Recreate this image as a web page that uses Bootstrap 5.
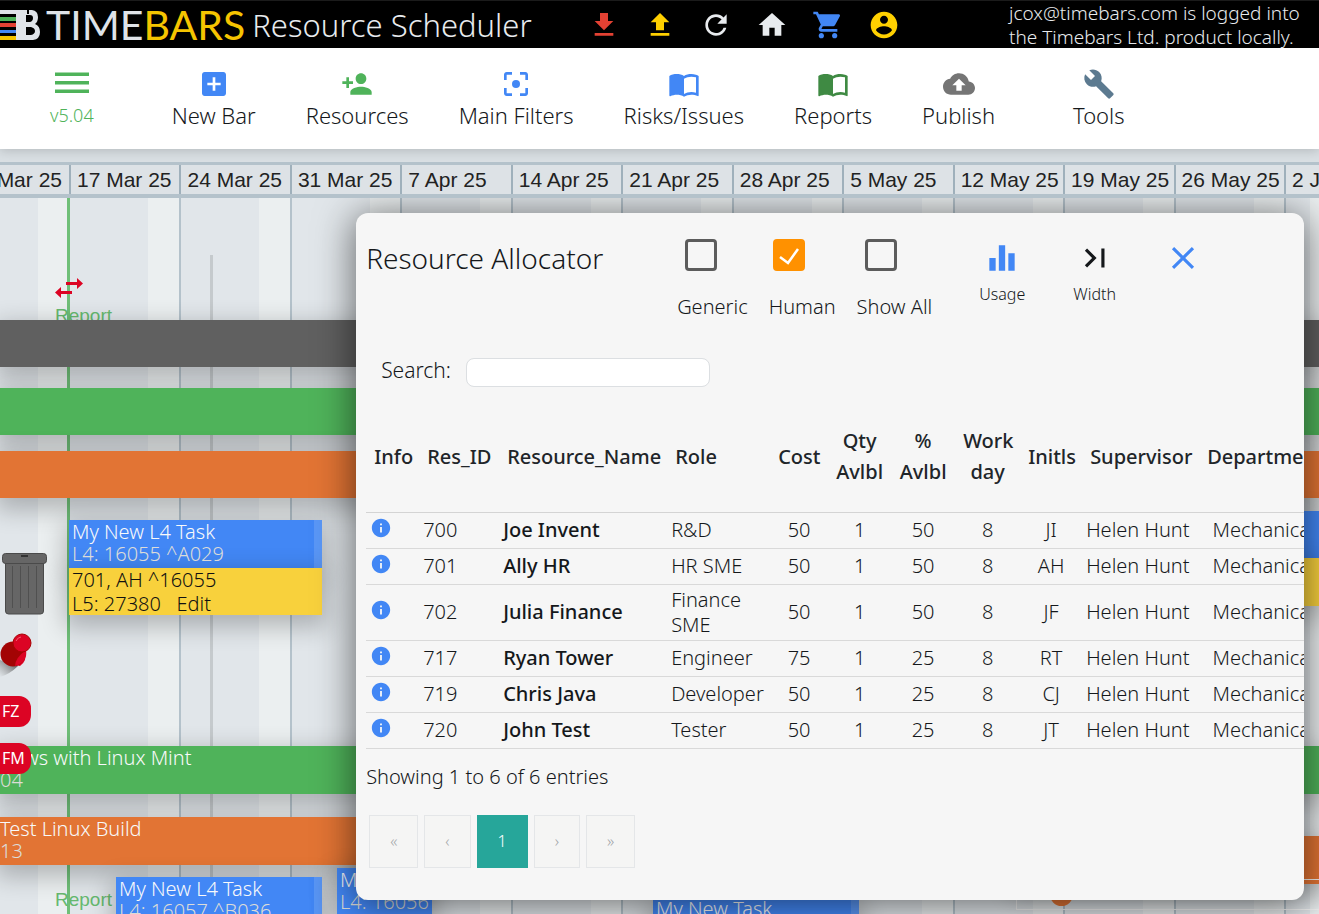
<!DOCTYPE html>
<html lang="en">
<head>
<meta charset="utf-8">
<meta name="viewport" content="width=device-width, initial-scale=1">
<title>Timebars Resource Scheduler</title>
<link rel="stylesheet" href="https://cdn.jsdelivr.net/npm/bootstrap@5.3.0/dist/css/bootstrap.min.css">
<style>
  :root { --tb-blue: #4287f5; --tb-green: #4fb35a; --tb-orange: #e27434; --tb-red: #dc0424; --tb-line: #b4c2cb; }
  body { font: 300 20px/25px "Noto Sans", "Open Sans", sans-serif; color: #15181b; background: #d9dfe3; }
  svg { display: block; fill: currentColor; }
  button { font-weight: 300; }

  .topbar { height: 48px; background: #000; color: #e8ebee; border-top: 1px solid #1b1b1b; }
  .brand-mark { width: 40px; height: 30px; }
  .brand-word { margin: 0 7px 0 6px; font: 400 41px/48px Lato, sans-serif; color: #dfe3e8; }
  .brand-word span { color: #f5c400; }
  .app-title { font-size: 31px; line-height: 48px; }
  .quick-links { gap: 24px; margin-left: 56px; }
  .quick-links svg, .tool svg { width: 32px; height: 32px; }
  .login-note { font-size: 19px; line-height: 24px; width: 310px; }

  .toolbar { gap: 50px; padding: 20px 0 19px 50px; background: #fff; box-shadow: 0 2px 10px rgba(0,0,0,.16); z-index: 4; }
  .tool { padding: 0; border: 0; background: none; color: #15181b; font-size: 22px; line-height: 30px; }
  .tool svg { margin: 0 auto; }
  .tool-version { margin-right: 28px; font-size: 18px; color: var(--tb-green); }
  .tool-last { margin-left: 28px; }

  .week-grid { display: grid; grid-template-columns: 69px repeat(11, 1fr) 35px; }
  .dates { margin-top: 13px; border-top: 3px solid var(--tb-line); border-bottom: 4px solid var(--tb-line);
           font: 400 21px/29px "Liberation Sans", Arial, sans-serif; color: #222; background: #dde2e6; z-index: 3; }
  .dates div { overflow: hidden; white-space: nowrap; padding-left: 6px; border-left: 2px solid #9fb0bb; }
  .dates div:first-child { display: flex; justify-content: flex-end; padding: 0 7px 0 0; border: 0; }
  .week-cols div { border-left: 2px solid var(--tb-line);
           background: linear-gradient(to right, #e1e6ea 72%, #ebeff0 72%); }
  .week-cols div:first-child { border: 0; background: linear-gradient(to right, #e1e6ea 55%, #ebeff0 55%); }
  .week-cols div:nth-child(2) { border-left: 0; }
  .report-line { left: 67px; width: 3px; background: #6fbf78; }
  .grey-line { left: 210px; top: 57px; width: 3px; background: rgba(0,0,0,.12); }
  .report-tag { left: 55px; font: 400 19px/24px "Liberation Sans", Arial, sans-serif; color: #66b96f; }
  .move-icon { left: 55px; top: 78px; width: 28px; height: 24px; color: var(--tb-red); }

  .gantt { min-height: 0; }
  .lanes { padding-top: 122px; }
  .gbar { height: 47px; box-shadow: 0 8px 24px 4px rgba(0,0,0,.24); white-space: nowrap; overflow: hidden;
          line-height: 22px; padding-top: 1px; color: #f8f9fa; }
  .gbar small { display: block; font-size: 20px; color: #dcdcd8; }
  .bar-tall { height: 48px; }
  .bar-grey { background: #606060; }
  .bar-green { background: var(--tb-green); }
  .bar-orange { background: var(--tb-orange); }
  .bar-blue { background: var(--tb-blue); padding-left: 3px; }
  .bar-yellow { background: #f8d13c; color: #111; line-height: 24px; padding: 0 0 0 3px; }
  .handle { border-right: 8px solid #5a97f6; }
  .gap-a { margin-top: 21px; } .gap-b { margin-top: 16px; } .gap-c { margin-top: 13px; }
  .gap-d { margin-top: 131px; } .gap-e { margin-top: 23px; }
  .edge-col { width: 60px; }
  .task-a { margin: 9px 0 0 69px; width: 253px; }
  .late-col { width: 303px; margin-top: 19px; }
  .task-b { margin: 9px 0 0 116px; width: 206px; }
  .task-c { margin-left: 15px; width: 95px; }
  .task-d { margin: 29px 0 0 221px; width: 206px; }
  .task-row { margin-top: 3px; }
  .milestone { height: 31px; margin-top: -5px; border: 1px solid #f0f0f0; border-right: 0; padding: 3px 0 0 33px; }
  .milestone i { display: block; width: 23px; height: 23px; border-radius: 50%; background: var(--tb-orange); }

  .side-tools { left: 0; top: 354px; z-index: 2; }
  .pin-icon { margin: 16px 0 0; }
  .pill { width: 31px; height: 31px; padding: 0 0 0 2px; border: 0; border-radius: 0 12px 12px 0; background: var(--tb-red);
          color: #fff; font-size: 16px; font-weight: 400; line-height: 31px; text-align: left; }

  .allocator { left: 27%; right: 15px; top: 15px; padding: 26px 0 32px 10px; border-radius: 12px; background: #f6f6f6;
               box-shadow: 0 4px 38px 2px rgba(0,0,0,.55); overflow: hidden; z-index: 2; }
  .allocator h1 { width: 311px; font-size: 28px; font-weight: 300; line-height: 38px; }
  .check-set { gap: 21px; }
  .check-set .form-check-input { display: block; width: 32px; height: 32px; margin: 0 0 21px; border: 3px solid #5c5c5c;
               border-radius: 4px; background-color: transparent; }
  .check-set .form-check-input:checked { border-color: #ff9100; background-color: #ff9100; background-size: 30px; background-image:
      url("data:image/svg+xml,%3Csvg xmlns='http://www.w3.org/2000/svg' viewBox='0 0 30 30'%3E%3Cpath d='M6 17l8 6L24 9' fill='none' stroke='%23fff' stroke-width='2.500'/%3E%3C/svg%3E"); }
  .check-set label { display: block; line-height: 30px; }
  .action-set { gap: 48px; margin-left: 47px; }
  .action { padding: 0; border: 0; background: none; font-size: 16px; line-height: 24px; color: #15181b; }
  .action svg { width: 38px; height: 38px; margin: 0 auto 5px; }
  .search-row { margin: 36px 0 14px 15px; gap: 15px; font-size: 21px; line-height: 25px; }
  .search-row input { width: 244px; height: 29px; border-radius: 8px; border-color: #dcdfe2; }
  .res-table { width: 1000px; table-layout: fixed; --bs-table-bg: transparent; }
  .res-table th { height: 111px; padding: 0 8px; font-weight: 500; line-height: 31px; vertical-align: middle; border-color: #d4d4d4; color: #212529; }
  .res-table td { height: 36px; padding: 2px 4px 3px; vertical-align: middle; border-color: #d9d9d9; color: #15181b; }
  .res-table td:nth-child(3) { font-weight: 500; }
  .res-table td:nth-child(n+5):not(:nth-child(10)), .res-table th:nth-child(n+5):not(:nth-child(10)) { text-align: center; }
  .res-table button { display: block; padding: 0 0 4px; border: 0; background: none; color: var(--tb-blue); }
  .res-table button svg { width: 22px; height: 22px; }
  .entries { margin: 13px 0 23px; line-height: 30px; }
  .pages { --bs-pagination-border-radius: 0; gap: 7px; margin-left: 3px; }
  .pages .page-link { padding: 0 20px; line-height: 51px; border: 1px solid #e4e6e8; background: #f5f5f4; color: #a0a3a6; }
  .pages .active .page-link { background: #26a69a; border-color: #26a69a; color: #fff; }
</style>
</head>
<body class="vh-100 d-flex flex-column overflow-hidden">

<header class="topbar d-flex align-items-center flex-shrink-0 text-nowrap">
  <svg class="brand-mark" viewBox="0 0 40 30" aria-hidden="true">
    <path fill="#dfe3e8" d="M0 0h27v4H0zM16 2h8v28h-8z"/>
    <path fill="#dfe3e8" fill-rule="evenodd" d="M29 0h3q6 1 6 7q0 5-3 7q5 2 5 8q0 7-7 8H20V4h9zM26 5v7h4q3-1 3-4t-3-3zM26 17v8h5q4-1 4-4t-4-4z"/>
    <path fill="#4fb35a" d="M0 7h16v4H0z"/><path fill="#e34133" d="M0 13h16v4H0z"/>
    <path fill="#4287f5" d="M0 20h16v3H0z"/><path fill="#f5c400" d="M0 26h16v4H0z"/>
  </svg>
  <div class="brand-word">TIME<span>BARS</span></div>
  <div class="app-title">Resource Scheduler</div>
  <nav class="quick-links d-flex" aria-label="Quick links">
    <a href="#" aria-label="Download" style="color:#e34133"><svg viewBox="0 0 24 24"><path d="M19 9h-4V3H9v6H5l7 7 7-7zM5 18v2h14v-2H5z"/></svg></a>
    <a href="#" aria-label="Upload" style="color:#ffd000"><svg viewBox="0 0 24 24"><path d="M9 16h6v-6h4l-7-7-7 7h4zm-4 2h14v2H5z"/></svg></a>
    <a href="#" aria-label="Refresh" style="color:#e8ebee"><svg viewBox="0 0 24 24"><path d="M17.65 6.35C16.2 4.9 14.21 4 12 4c-4.42 0-7.99 3.58-7.99 8s3.57 8 7.99 8c3.73 0 6.84-2.55 7.73-6h-2.08c-.82 2.33-3.04 4-5.65 4-3.31 0-6-2.69-6-6s2.69-6 6-6c1.66 0 3.14.69 4.22 1.78L13 11h7V4l-2.35 2.35z"/></svg></a>
    <a href="#" aria-label="Home" style="color:#e8ebee"><svg viewBox="0 0 24 24"><path d="M10 20v-6h4v6h5v-8h3L12 3 2 12h3v8z"/></svg></a>
    <a href="#" aria-label="Cart" style="color:#4287f5"><svg viewBox="0 0 24 24"><path d="M7 18c-1.1 0-1.99.9-1.99 2S5.9 22 7 22s2-.9 2-2-.9-2-2-2zM1 2v2h2l3.6 7.59-1.35 2.45c-.16.28-.25.61-.25.96 0 1.1.9 2 2 2h12v-2H7.42c-.14 0-.25-.11-.25-.25l.03-.12.9-1.63h7.45c.75 0 1.41-.41 1.75-1.03l3.58-6.49c.08-.14.12-.31.12-.48 0-.55-.45-1-1-1H5.21l-.94-2H1zm16 16c-1.1 0-1.99.9-1.99 2s.89 2 1.99 2 2-.9 2-2-.9-2-2-2z"/></svg></a>
    <a href="#" aria-label="Account" style="color:#ffd000"><svg viewBox="0 0 24 24"><path d="M12 2C6.48 2 2 6.48 2 12s4.48 10 10 10 10-4.48 10-10S17.52 2 12 2zm0 3c1.66 0 3 1.34 3 3s-1.34 3-3 3-3-1.34-3-3 1.34-3 3-3zm0 14.2c-2.5 0-4.71-1.28-6-3.22.03-1.99 4-3.08 6-3.08 1.99 0 5.97 1.09 6 3.08-1.29 1.94-3.5 3.22-6 3.22z"/></svg></a>
  </nav>
  <div class="login-note ms-auto">jcox@timebars.com is logged into<br>the Timebars Ltd. product locally.</div>
</header>

<nav class="toolbar d-flex flex-shrink-0 text-nowrap position-relative" aria-label="Main">
  <button class="tool tool-version"><svg viewBox="0 0 32 32" overflow="visible"><path d="M-1 4.500h34V8H-1zM-1 13h34v3.500H-1zM-1 21.500h34V25H-1z"/></svg>v5.04</button>
  <button class="tool"><svg viewBox="0 0 24 24" color="#4287f5"><path d="M19 3H5c-1.11 0-2 .9-2 2v14c0 1.1.89 2 2 2h14c1.1 0 2-.9 2-2V5c0-1.1-.9-2-2-2zm-2 10h-4v4h-2v-4H7v-2h4V7h2v4h4v2z"/></svg>New Bar</button>
  <button class="tool"><svg viewBox="0 0 24 24" color="#4fb35a"><path d="M15 12c2.21 0 4-1.79 4-4s-1.79-4-4-4-4 1.79-4 4 1.79 4 4 4zm-9-2V7H4v3H1v2h3v3h2v-3h3v-2H6zm9 4c-2.67 0-8 1.34-8 4v2h16v-2c0-2.66-5.33-4-8-4z"/></svg>Resources</button>
  <button class="tool"><svg viewBox="0 0 24 24" color="#4287f5"><circle cx="12" cy="12" r="3"/><path d="M5 15H3v4c0 1.1.9 2 2 2h4v-2H5v-4zM5 5h4V3H5c-1.1 0-2 .9-2 2v4h2V5zm14-2h-4v2h4v4h2V5c0-1.1-.9-2-2-2zm0 16h-4v2h4c1.1 0 2-.9 2-2v-4h-2v4z"/></svg>Main Filters</button>
  <button class="tool"><svg viewBox="0 0 24 24" color="#4287f5"><path d="M21 5c-1.11-.35-2.33-.5-3.5-.5-1.95 0-4.05.4-5.5 1.5-1.45-1.1-3.55-1.5-5.5-1.5S2.45 4.9 1 6v14.65c0 .25.25.5.5.5.1 0 .15-.05.25-.05C3.1 20.45 5.05 20 6.5 20c1.95 0 4.05.4 5.5 1.5 1.35-.85 3.8-1.5 5.5-1.5 1.65 0 3.35.3 4.75 1.05.1.05.15.05.25.05.25 0 .5-.25.5-.5V6c-.6-.45-1.25-.75-2-1zm0 13.5c-1.1-.35-2.3-.5-3.5-.5-1.7 0-4.15.65-5.5 1.5V8c1.35-.85 3.8-1.5 5.5-1.5 1.2 0 2.4.15 3.5.5v11.5z"/></svg>Risks/Issues</button>
  <button class="tool"><svg viewBox="0 0 24 24" color="#3f8a43"><path d="M21 5c-1.11-.35-2.33-.5-3.5-.5-1.95 0-4.05.4-5.5 1.5-1.45-1.1-3.55-1.5-5.5-1.5S2.45 4.9 1 6v14.65c0 .25.25.5.5.5.1 0 .15-.05.25-.05C3.1 20.45 5.05 20 6.5 20c1.95 0 4.05.4 5.5 1.5 1.35-.85 3.8-1.5 5.5-1.5 1.65 0 3.35.3 4.75 1.05.1.05.15.05.25.05.25 0 .5-.25.5-.5V6c-.6-.45-1.25-.75-2-1zm0 13.5c-1.1-.35-2.3-.5-3.5-.5-1.7 0-4.15.65-5.5 1.5V8c1.35-.85 3.8-1.5 5.5-1.5 1.2 0 2.4.15 3.5.5v11.5z"/></svg>Reports</button>
  <button class="tool"><svg viewBox="0 0 24 24" color="#757575"><path d="M19.35 10.04C18.67 6.59 15.64 4 12 4 9.11 4 6.6 5.64 5.35 8.04 2.34 8.36 0 10.91 0 14c0 3.31 2.69 6 6 6h13c2.76 0 5-2.24 5-5 0-2.64-2.05-4.78-4.65-4.96zM14 13v4h-4v-4H7l5-5 5 5h-3z"/></svg>Publish</button>
  <button class="tool tool-last"><svg viewBox="0 0 24 24" color="#5c7a90"><path d="M22.7 19l-9.1-9.1c.9-2.3.4-5-1.5-6.9-2-2-5-2.4-7.4-1.3L9 6 6 9 1.6 4.7C.4 7.1.9 10.1 2.9 12.1c1.9 1.9 4.6 2.4 6.9 1.5l9.1 9.1c.4.4 1 .4 1.4 0l2.3-2.3c.5-.4.5-1.1.1-1.4z"/></svg>Tools</button>
</nav>

<div class="week-grid dates flex-shrink-0 position-relative">
  <div>10 Mar 25</div><div>17 Mar 25</div><div>24 Mar 25</div><div>31 Mar 25</div><div>7 Apr 25</div><div>14 Apr 25</div><div>21 Apr 25</div><div>28 Apr 25</div><div>5 May 25</div><div>12 May 25</div><div>19 May 25</div><div>26 May 25</div><div>2 Jun 25</div>
</div>

<main class="gantt position-relative flex-fill">
  <div class="week-grid week-cols position-absolute top-0 start-0 w-100 h-100">
    <div></div><div></div><div></div><div></div><div></div><div></div><div></div><div></div><div></div><div></div><div></div><div></div><div></div>
  </div>
  <div class="report-line position-absolute top-0 h-100"></div>
  <div class="grey-line position-absolute bottom-0"></div>
  <svg class="move-icon position-absolute" viewBox="0 0 28 24"><path d="M11 6h11V2l6 5.500-6 5.500V9H11zM17 18H6v4l-6-5.500L6 11v4h11z"/></svg>
  <div class="report-tag position-absolute" style="top:106px">Report</div>
  <div class="report-tag position-absolute" style="top:690px">Report</div>

  <div class="lanes position-relative h-100 overflow-hidden">
    <div class="gbar bar-grey"></div>
    <div class="gbar bar-green gap-a"></div>
    <div class="gbar bar-orange gap-b"></div>
    <div class="d-flex justify-content-between align-items-start gap-c">
      <div class="task-a">
        <div class="gbar bar-tall bar-blue handle">My New L4 Task<small>L4: 16055 ^A029</small></div>
        <div class="gbar bar-yellow">701, AH ^16055<br>L5: 27380 &nbsp; Edit</div>
      </div>
      <div class="edge-col">
        <div class="gbar bar-blue"></div>
        <div class="gbar bar-tall bar-yellow"></div>
      </div>
    </div>
    <div class="gbar bar-tall bar-green gap-d"><span class="ms-4">ws with Linux Mint</span><small>04</small></div>
    <div class="d-flex align-items-start gap-e">
      <div class="flex-fill">
        <div class="gbar bar-tall bar-orange">Test Linux Build<small>13</small></div>
        <div class="task-row d-flex align-items-start">
          <div class="gbar bar-tall bar-blue handle task-b">My New L4 Task<small>L4: 16057 ^B036</small></div>
          <div class="gbar bar-tall bar-blue task-c">My New L4 Task<small>L4: 16056</small></div>
          <div class="gbar bar-tall bar-blue handle task-d">My New Task<small>L4: 16058</small></div>
        </div>
      </div>
      <div class="late-col">
        <div class="gbar bar-tall bar-orange"></div>
        <div class="milestone position-relative"><i></i></div>
      </div>
    </div>
  </div>

  <div class="side-tools position-absolute d-flex flex-column align-items-start">
    <svg width="49" height="64" viewBox="0 0 49 64" aria-label="Trash">
      <g fill="#666" stroke="#4a4a4a"><path d="M5.500 11h38v48q0 3-3 3h-32q-3 0-3-3z"/><rect x="2.500" y="1.500" width="44" height="10" rx="3"/></g>
      <path d="M21 4h7" stroke="#333" stroke-width="2"/><path d="M12.500 14v42M20.500 14v42M28.500 14v42M36.500 14v42" stroke="#505050"/>
    </svg>
    <svg class="pin-icon" width="34" height="64" viewBox="0 0 34 64" aria-label="Pin">
      <defs><linearGradient id="ps" x1="1" y1="0" x2="0" y2="1"><stop offset="0" stop-color="#444"/><stop offset="1" stop-color="#777" stop-opacity="0"/></linearGradient></defs>
      <path d="M0 28L18 34Q10 42 0 45z" fill="url(#ps)"/>
      <path d="M14 8L24 20Q28 28 20 34L10 32z" fill="#dc0424"/>
      <circle cx="13" cy="22" r="12.500" fill="#a30404"/><path d="M26 18Q28 30 15 34Q15 26 26 18z" fill="#dc0424"/>
      <circle cx="22" cy="11" r="9" fill="#dc0424" stroke="#a80404"/><path d="M16 9q2-4 5-4" fill="none" stroke="#f06070"/>
    </svg>
    <button class="pill">FZ</button>
    <button class="pill mt-3">FM</button>
  </div>

  <section class="allocator position-absolute" role="dialog" aria-labelledby="alloc-title">
    <div class="d-flex align-items-start text-nowrap">
      <h1 class="mb-0 flex-shrink-0" id="alloc-title">Resource Allocator</h1>
      <div class="check-set d-flex">
        <div><input class="form-check-input ms-2" type="checkbox" id="c1"><label for="c1">Generic</label></div>
        <div><input class="form-check-input ms-1" type="checkbox" id="c2" checked><label for="c2">Human</label></div>
        <div><input class="form-check-input ms-2" type="checkbox" id="c3"><label for="c3">Show All</label></div>
      </div>
      <div class="action-set d-flex align-items-start">
        <button class="action"><svg viewBox="0 0 24 24" color="#4287f5"><path d="M10 20h4V4h-4v16zm-6 0h4v-8H4v8zM16 9v11h4V9h-4z"/></svg>Usage</button>
        <button class="action"><svg viewBox="0 0 24 24"><path d="M5.590 7.410L10.180 12l-4.590 4.590L7 18l6-6-6-6zM16 6h2v12h-2z"/></svg>Width</button>
        <button class="action" aria-label="Close"><svg viewBox="0 0 24 24" color="#4287f5"><path d="M19 6.410L17.590 5 12 10.590 6.410 5 5 6.410 10.590 12 5 17.590 6.410 19 12 13.410 17.590 19 19 17.590 13.410 12z"/></svg></button>
      </div>
    </div>
    <div class="search-row d-flex align-items-start">
      <label for="search">Search:</label><input class="form-control p-1" type="text" id="search">
    </div>
    <table class="table res-table mb-0">
      <colgroup><col style="width:53px"><col style="width:80px"><col style="width:168px"><col style="width:103px"><col style="width:58px"><col style="width:63px"><col style="width:64px"><col style="width:65px"><col style="width:62px"><col style="width:117px"><col style="width:129px"><col></colgroup>
      <thead><tr><th>Info</th><th>Res_ID</th><th>Resource_Name</th><th>Role</th><th>Cost</th><th>Qty Avlbl</th><th>% Avlbl</th><th>Work day</th><th>Initls</th><th>Supervisor</th><th>Department</th><th></th></tr></thead>
      <tbody id="rows"></tbody>
    </table>
    <p class="entries">Showing 1 to 6 of 6 entries</p>
    <ul class="pagination pages mb-0">
      <li class="page-item"><a class="page-link" href="#">«</a></li>
      <li class="page-item"><a class="page-link" href="#">‹</a></li>
      <li class="page-item active"><a class="page-link" href="#">1</a></li>
      <li class="page-item"><a class="page-link" href="#">›</a></li>
      <li class="page-item"><a class="page-link" href="#">»</a></li>
    </ul>
  </section>
</main>

<script src="https://cdn.jsdelivr.net/npm/bootstrap@5.3.0/dist/js/bootstrap.bundle.min.js"></script>
<script>
  const resources = [
    [700, 'Joe Invent', 'R&amp;D', 50, 50, 'JI'],
    [701, 'Ally HR', 'HR SME', 50, 50, 'AH'],
    [702, 'Julia Finance', 'Finance SME', 50, 50, 'JF'],
    [717, 'Ryan Tower', 'Engineer', 75, 25, 'RT'],
    [719, 'Chris Java', 'Developer', 50, 25, 'CJ'],
    [720, 'John Test', 'Tester', 50, 25, 'JT']
  ];
  const info = '<button aria-label="Info"><svg viewBox="0 0 24 24"><path d="M12 2C6.480 2 2 6.480 2 12s4.480 10 10 10 10-4.480 10-10S17.520 2 12 2zm1 15h-2v-6h2v6zm0-8h-2V7h2v2z"/></svg></button>';
  document.getElementById('rows').innerHTML = resources.map(([id, name, role, cost, pct, ini]) =>
    `<tr><td>${info}</td><td>${id}</td><td>${name}</td><td>${role}</td><td>${cost}</td><td>1</td><td>${pct}</td><td>8</td><td>${ini}</td><td>Helen Hunt</td><td>Mechanical</td><td></td></tr>`).join('');
</script>
</body>
</html>
